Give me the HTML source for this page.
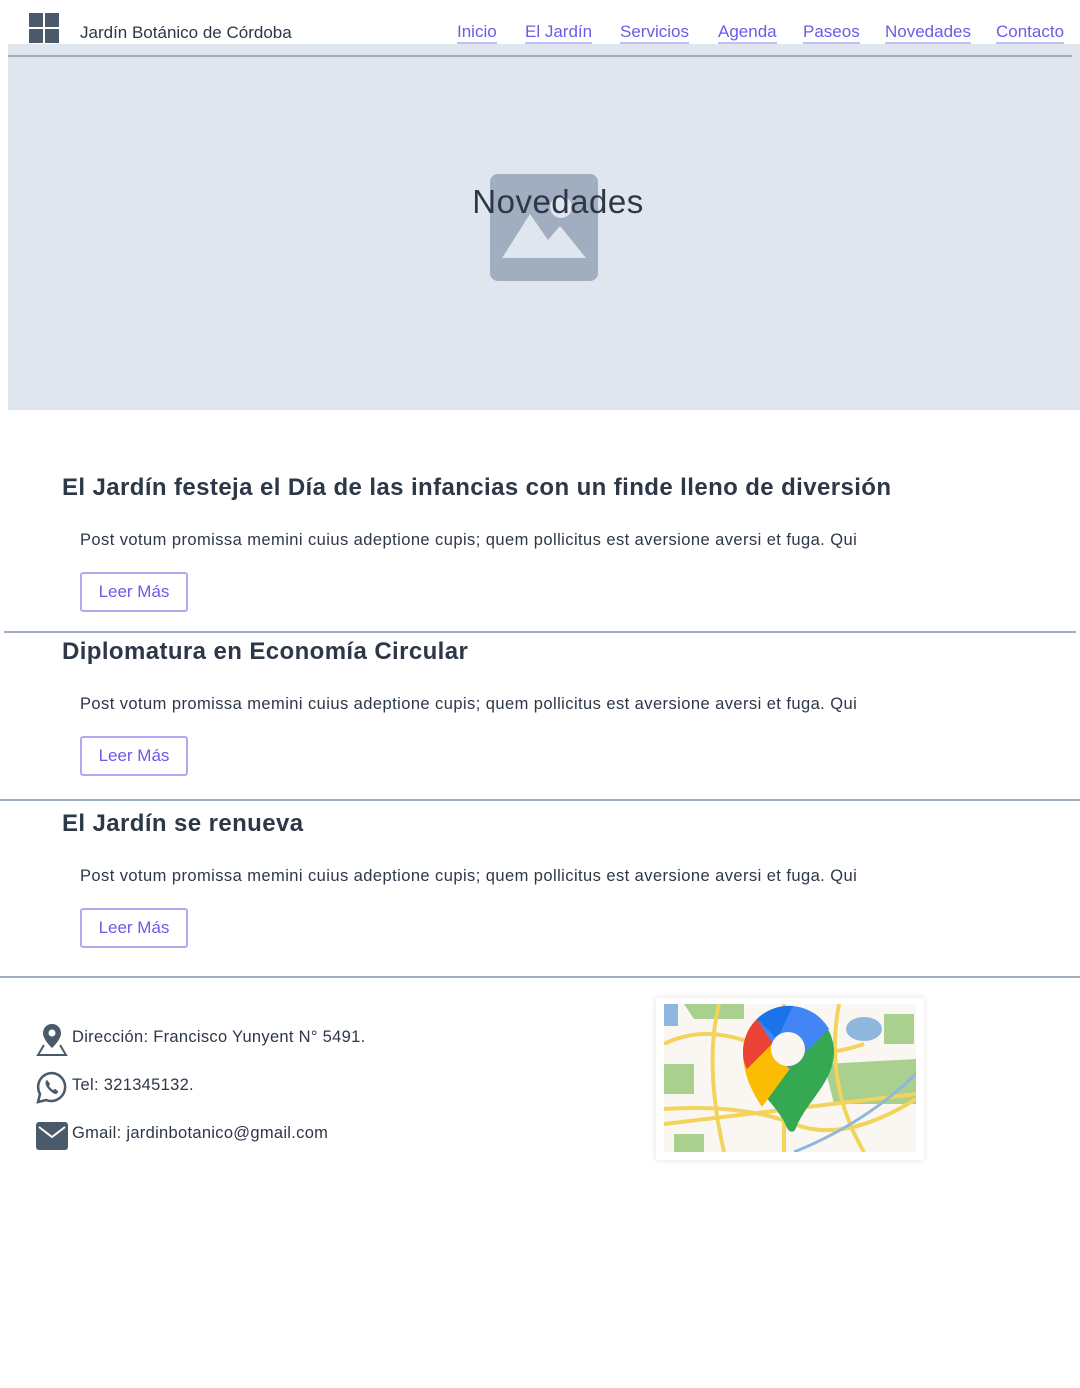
<!DOCTYPE html>
<html><head><meta charset="utf-8"><style>
*{margin:0;padding:0;box-sizing:border-box}
body{width:1080px;height:1388px;background:#fff;font-family:"Liberation Sans",sans-serif;color:#2d3748;position:relative;overflow:hidden}
.a{position:absolute}
.nav a{position:absolute;top:22px;font-size:17px;color:#6b5be6;text-decoration:none;border-bottom:2px solid #c4bdf5;line-height:20px}
h2{position:absolute;left:62px;font-size:24px;font-weight:bold;color:#2d3748;letter-spacing:.4px}
p.t{position:absolute;left:80px;font-size:16.5px;color:#2d3748;letter-spacing:.43px}
.btn{position:absolute;left:80px;width:108px;height:40px;border:2px solid #b3a9f2;border-radius:3px;color:#6b5be6;font-size:17px;text-align:center;line-height:36px}
.hr{position:absolute;height:2px;background:#a0aec0}
.f{position:absolute;left:72px;font-size:16.5px;color:#2d3748;letter-spacing:.3px}
</style></head><body>
<svg class="a" style="left:29px;top:13px" width="30" height="30"><rect width="14" height="14" fill="#4a5a6a"/><rect x="16" width="14" height="14" fill="#4a5a6a"/><rect y="16" width="14" height="14" fill="#4a5a6a"/><rect x="16" y="16" width="14" height="14" fill="#4a5a6a"/></svg>
<div class="a" style="left:80px;top:23px;font-size:17px">Jardín Botánico de Córdoba</div>
<div class="nav">
<a style="left:457px">Inicio</a><a style="left:525px">El Jardín</a><a style="left:620px">Servicios</a><a style="left:718px">Agenda</a><a style="left:803px">Paseos</a><a style="left:885px">Novedades</a><a style="left:996px">Contacto</a>
</div>
<div class="a" style="left:8px;top:44px;width:1072px;height:366px;background:#e0e6ee"></div>
<div class="hr" style="left:8px;top:55px;width:1064px"></div>
<svg class="a" style="left:490px;top:174px" width="108" height="107"><rect width="108" height="107" rx="8" fill="#a0aec0"/><circle cx="71" cy="33" r="11" fill="#e0e6ee"/><path d="M12 84 L40 40 L58 66 L70 52 L96 84 Z" fill="#e0e6ee"/></svg>
<div class="a" style="left:0;width:1116px;top:183px;text-align:center;font-size:33px;color:#2d3748;letter-spacing:.5px">Novedades</div>

<h2 style="top:474px">El Jardín festeja el Día de las infancias con un finde lleno de diversión</h2>
<p class="t" style="top:531px">Post votum promissa memini cuius adeptione cupis; quem pollicitus est aversione aversi et fuga. Qui</p>
<div class="btn" style="top:572px">Leer Más</div>
<div class="hr" style="left:4px;top:631px;width:1072px"></div>
<h2 style="top:638px">Diplomatura en Economía Circular</h2>
<p class="t" style="top:695px">Post votum promissa memini cuius adeptione cupis; quem pollicitus est aversione aversi et fuga. Qui</p>
<div class="btn" style="top:736px">Leer Más</div>
<div class="hr" style="left:0;top:799px;width:1080px"></div>
<h2 style="top:810px">El Jardín se renueva</h2>
<p class="t" style="top:867px">Post votum promissa memini cuius adeptione cupis; quem pollicitus est aversione aversi et fuga. Qui</p>
<div class="btn" style="top:908px">Leer Más</div>
<div class="hr" style="left:0;top:976px;width:1080px"></div>

<svg class="a" style="left:36px;top:1023px" width="32" height="33" viewBox="0 0 32 33"><path d="M16 1a9 9 0 0 0-9 9c0 7 9 15 9 15s9-8 9-15a9 9 0 0 0-9-9z" fill="#4a5a6a"/><circle cx="16" cy="10" r="3.5" fill="#fff"/><path d="M8 22 L2 32 H30 L24 22" fill="none" stroke="#4a5a6a" stroke-width="2"/></svg>
<div class="f" style="top:1028px">Dirección: Francisco Yunyent N° 5491.</div>
<svg class="a" style="left:36px;top:1071px" width="32" height="33" viewBox="0 0 32 33"><path d="M16 2a14 14 0 0 0-12 21l-2 8 8-2a14 14 0 1 0 6-27z" fill="none" stroke="#4a5a6a" stroke-width="2.5"/><path d="M11 9c-2 1-2 4 0 7s5 6 8 7c2 0 3-1 3-3l-3-2-2 1c-2-1-3-3-4-4l1-2-2-3z" fill="#4a5a6a"/></svg>
<div class="f" style="top:1076px">Tel: 321345132.</div>
<svg class="a" style="left:36px;top:1122px" width="32" height="28" viewBox="0 0 32 28"><rect width="32" height="28" rx="3" fill="#4a5a6a"/><path d="M3 5 L16 15 L29 5" fill="none" stroke="#fff" stroke-width="2"/></svg>
<div class="f" style="top:1124px">Gmail: jardinbotanico@gmail.com</div>

<div class="a" style="left:656px;top:998px;width:268px;height:162px;background:#fff;box-shadow:0 0 6px rgba(0,0,0,.12)"></div>
<svg class="a" style="left:664px;top:1004px" width="252" height="148" viewBox="0 0 252 148">
<rect width="252" height="148" fill="#faf7f2"/>
<path d="M0 60 H30 V90 H0Z M160 60 L252 55 V100 H170Z M20 0 H80 V15 H30Z M220 10 H250 V40 H220Z M10 130 H40 V148 H10Z" fill="#a9d08e"/>
<ellipse cx="200" cy="25" rx="18" ry="12" fill="#8fb6dd"/><path d="M0 0 H14 V22 H0Z" fill="#8fb6dd"/>
<path d="M0 40 Q40 20 90 40 T200 40 M0 105 Q80 100 130 120 T252 95 M55 0 Q40 60 60 148 M120 0 V148 M175 0 Q160 80 200 148 M0 120 L252 90" fill="none" stroke="#f2d45c" stroke-width="4"/>
<path d="M130 148 Q200 120 252 70" fill="none" stroke="#8fb6dd" stroke-width="3"/>
<path d="M125 2a46 46 0 0 0-46 46c0 30 34 50 44 76 3 5 7 5 9 0 10-26 38-46 38-76a46 46 0 0 0-45-46z" fill="#34a853"/>
<path d="M79 48a46 46 0 0 1 14-33l40 40-35 48C88 88 79 70 79 48z" fill="#fbbc04"/>
<path d="M79 48a46 46 0 0 1 14-33l20 20-30 30C80 60 79 54 79 48z" fill="#ea4335"/>
<path d="M93 15a46 46 0 0 1 72 10l-40 40z" fill="#4285f4"/>
<path d="M93 15a46 46 0 0 1 36-13l-16 33z" fill="#1a73e8"/>
<circle cx="124" cy="45" r="17" fill="#faf7f2"/>
</svg>
</body></html>
